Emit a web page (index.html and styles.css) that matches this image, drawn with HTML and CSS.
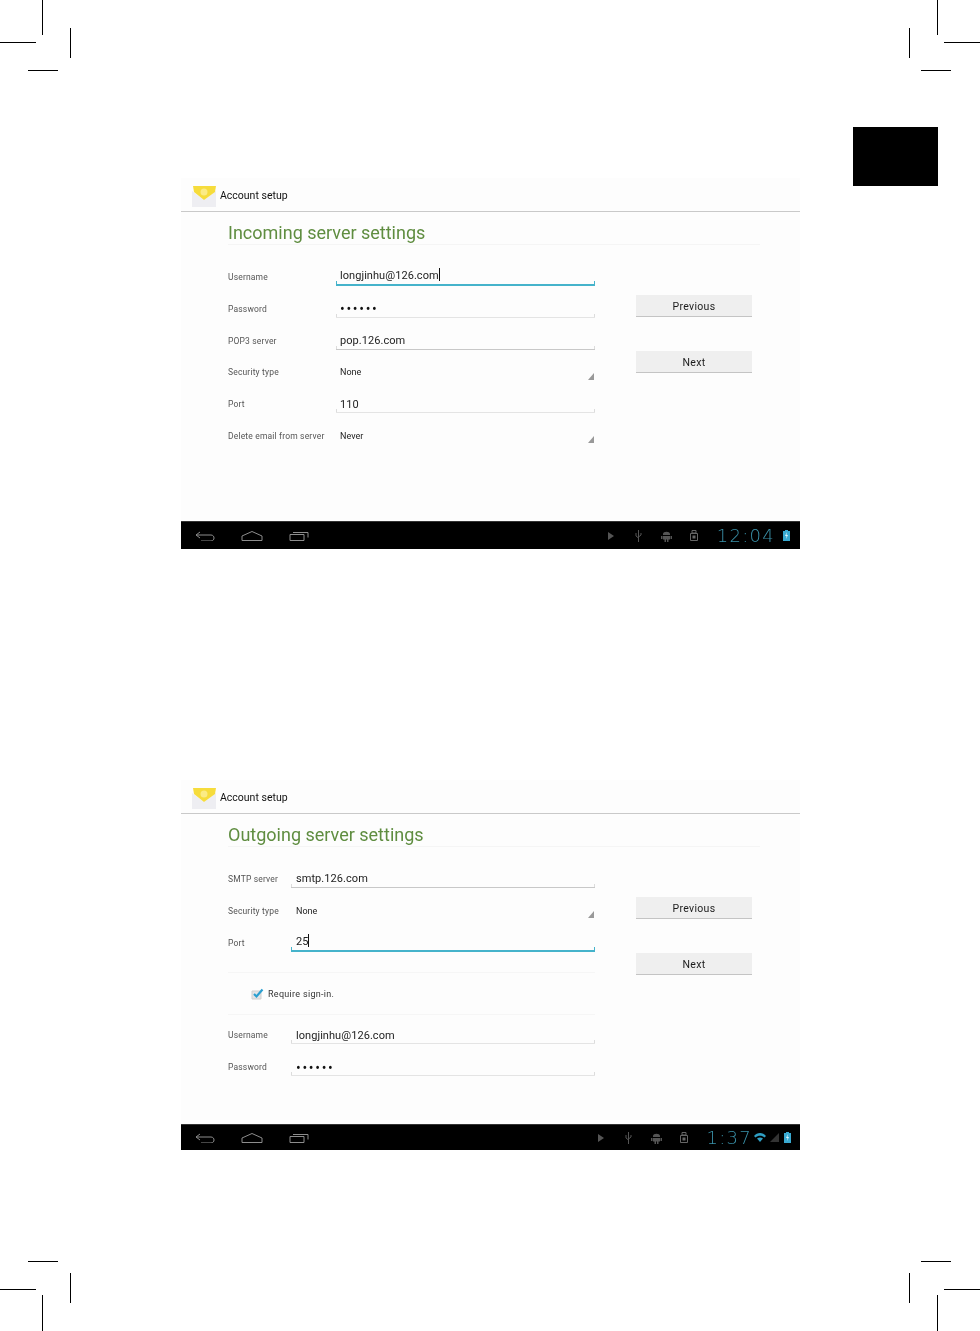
FILE: index.html
```html
<!DOCTYPE html>
<html lang="en">
<head>
  <meta charset="UTF-8">
  <title>Account setup</title>
  <link rel="stylesheet" href="styles.css">
</head>
<body>
  <!-- crop marks of the printed page -->
  <i class="mark v x42 top-out"></i>
  <i class="mark h l-out y42"></i>
  <i class="mark v x70 top-in"></i>
  <i class="mark h l-in y70"></i>
  <i class="mark v x937 top-out"></i>
  <i class="mark h r-out y42"></i>
  <i class="mark v x909 top-in"></i>
  <i class="mark h r-in y70"></i>
  <i class="mark h l-in y1261"></i>
  <i class="mark h l-out y1289"></i>
  <i class="mark v x70 bot-in"></i>
  <i class="mark v x42 bot-out"></i>
  <i class="mark h r-in y1261"></i>
  <i class="mark h r-out y1289"></i>
  <i class="mark v x909 bot-in"></i>
  <i class="mark v x937 bot-out"></i>
  <div class="tab"></div>

  <section class="screen">
    <header class="screen-head">
      <svg class="mail" viewBox="0 0 26 23"><path d="M1 6 13 15 25 6V22H1Z" fill="#eeeef2"/><path d="M2 1H25L24 7 13 15 3 7Z" fill="#f6dc3c"/><circle cx="13" cy="7" r="3.5" fill="#fbeb85"/></svg>
      <span>Account setup</span>
    </header>
    <div class="screen-main">
      <h1>Incoming server settings</h1>
      <div class="columns">
        <div class="form form-in">
          <label>Username</label>
          <div class="field active">longjinhu@126.com<b class="caret"></b></div>
          <label>Password</label>
          <div class="field dots">••••••</div>
          <label>POP3 server</label>
          <div class="field strong">pop.126.com</div>
          <label>Security type</label>
          <div class="spinner">None</div>
          <label>Port</label>
          <div class="field">110</div>
          <label>Delete email from server</label>
          <div class="spinner">Never</div>
        </div>
        <div class="side">
          <button>Previous</button>
          <button>Next</button>
        </div>
      </div>
    </div>
    <footer class="nav">
      <div class="nav-keys">
        <svg viewBox="0 0 20 10"><path d="M5 1 1 4 5 7M1 4H16C20 4 20 10 16 10H6"/></svg>
        <svg viewBox="0 0 22 10"><path d="M1 9.5V5L11 .5 21 5V9.5Z"/></svg>
        <svg viewBox="0 0 20 10"><path d="M1 3.5H15V9.5H1ZM4 1.500H19V6.500"/></svg>
      </div>
      <div class="nav-status">
        <svg class="s-play" viewBox="0 0 6 8"><path d="M0 0 6 4 0 8Z"/></svg>
        <svg class="s-usb" viewBox="0 0 7 12"><path d="M3.500 0V12M1 3V6L3.500 8M6 3V5L3.500 7"/></svg>
        <svg class="s-bug" viewBox="0 0 11 12"><path d="M2 4C2 1 9 1 9 4V5H2ZM0 6H1.500V9H0ZM9.500 6H11V9H9.500ZM2 6H9V9.500H7.500V12H6V9.500H5V12H3.500V9.500H2Z"/></svg>
        <svg class="s-sd" viewBox="0 0 8 11"><path d="M2 .5H6V3H2ZM.5 3.500H7.500V10.500H.5Z"/><path class="sd-core" d="M2.500 5.500H5.500V8.500H2.500Z"/></svg>
        <span class="clock">12:04</span>
        <svg class="s-batt" viewBox="0 0 7 11"><path d="M2 0H5V1H7V11H0V1H2Z"/><path class="bolt" d="M4 2 2 6H3.500L3 9 5 5H3.500Z"/></svg>
      </div>
    </footer>
  </section>

  <section class="screen screen-out">
    <header class="screen-head">
      <svg class="mail" viewBox="0 0 26 23"><path d="M1 6 13 15 25 6V22H1Z" fill="#eeeef2"/><path d="M2 1H25L24 7 13 15 3 7Z" fill="#f6dc3c"/><circle cx="13" cy="7" r="3.5" fill="#fbeb85"/></svg>
      <span>Account setup</span>
    </header>
    <div class="screen-main">
      <h1>Outgoing server settings</h1>
      <div class="columns">
        <div class="form form-out">
          <label>SMTP server</label>
          <div class="field strong">smtp.126.com</div>
          <label>Security type</label>
          <div class="spinner">None</div>
          <label>Port</label>
          <div class="field active">25<b class="caret"></b></div>
          <div class="check-row">
            <svg class="check" viewBox="0 0 13 12"><path class="box" d="M1 3H10V11H1Z"/><path class="tick" d="M3 6 5.500 8.500 11.500 1.500"/></svg>
            <span>Require sign-in.</span>
          </div>
          <label>Username</label>
          <div class="field">longjinhu@126.com</div>
          <label>Password</label>
          <div class="field dots">••••••</div>
        </div>
        <div class="side">
          <button>Previous</button>
          <button>Next</button>
        </div>
      </div>
    </div>
    <footer class="nav">
      <div class="nav-keys">
        <svg viewBox="0 0 20 10"><path d="M5 1 1 4 5 7M1 4H16C20 4 20 10 16 10H6"/></svg>
        <svg viewBox="0 0 22 10"><path d="M1 9.5V5L11 .5 21 5V9.5Z"/></svg>
        <svg viewBox="0 0 20 10"><path d="M1 3.5H15V9.5H1ZM4 1.500H19V6.500"/></svg>
      </div>
      <div class="nav-status">
        <svg class="s-play" viewBox="0 0 6 8"><path d="M0 0 6 4 0 8Z"/></svg>
        <svg class="s-usb" viewBox="0 0 7 12"><path d="M3.500 0V12M1 3V6L3.500 8M6 3V5L3.500 7"/></svg>
        <svg class="s-bug" viewBox="0 0 11 12"><path d="M2 4C2 1 9 1 9 4V5H2ZM0 6H1.500V9H0ZM9.500 6H11V9H9.500ZM2 6H9V9.500H7.500V12H6V9.500H5V12H3.500V9.500H2Z"/></svg>
        <svg class="s-sd" viewBox="0 0 8 11"><path d="M2 .5H6V3H2ZM.5 3.500H7.500V10.500H.5Z"/><path class="sd-core" d="M2.500 5.500H5.500V8.500H2.500Z"/></svg>
        <span class="clock">1:37</span>
        <svg class="s-wifi" viewBox="0 0 12 9"><path d="M0 3C3-1 9-1 12 3L10.500 4.500C8 2 4 2 1.500 4.500ZM3 5.500C5 4 7 4 9 5.500L6 9Z"/></svg>
        <svg class="s-signal" viewBox="0 0 9 9"><path d="M9 0V9H0Z"/></svg>
        <svg class="s-batt" viewBox="0 0 7 11"><path d="M2 0H5V1H7V11H0V1H2Z"/><path class="bolt" d="M4 2 2 6H3.500L3 9 5 5H3.500Z"/></svg>
      </div>
    </footer>
  </section>
</body>
</html>
```
FILE: styles.css
```css
html, body { margin: 0; }
body { position: relative; height: 1331px; overflow: hidden; background: #fff; padding: 178px 0 0 181px; box-sizing: border-box; font-family: 'Roboto', 'Liberation Sans', sans-serif; color: #1c1c1c; }

.mark { position: absolute; display: block; background: #000; }
.mark.v { width: 1px; }
.mark.h { height: 1px; }
.x42 { left: 42px; }
.x70 { left: 70px; }
.x909 { left: 909px; }
.x937 { left: 937px; }
.y42 { top: 42px; }
.y70 { top: 70px; }
.y1261 { top: 1261px; }
.y1289 { top: 1289px; }
.top-out { top: 0; height: 35px; }
.top-in { top: 28px; height: 30px; }
.bot-in { top: 1273px; height: 30px; }
.bot-out { top: 1295px; height: 36px; }
.l-out { left: 0; width: 36px; }
.l-in { left: 28px; width: 30px; }
.r-in { left: 921px; width: 30px; }
.r-out { left: 944px; width: 36px; }
.tab { position: absolute; left: 853px; top: 127px; width: 85px; height: 59px; background: #000; }

.screen { width: 619px; height: 371px; display: flex; flex-direction: column; background: #fdfdfd; filter: blur(0.4px); }
.screen-out { height: 370px; margin-top: 231px; }
.screen-out .nav { height: 26px; }

.screen-head { height: 34px; box-sizing: border-box; flex: none; display: flex; align-items: center; padding: 1px 0 0 10px; border-bottom: 1px solid #c9c9c9; font-size: 10.5px; color: #111; }
.mail { width: 26px; height: 23px; margin: 2px 3px 0 0; }

.screen-main { flex: 1; padding: 0 48px 0 47px; }
h1 { margin: 0 -8px 0 0; height: 33px; line-height: 41px; box-sizing: border-box; border-bottom: 1px solid #f5f5f5; font-size: 18px; font-weight: 400; color: #5f8d40; white-space: nowrap; }
.columns { display: flex; justify-content: space-between; margin-top: 15px; }

.form { display: grid; grid-auto-rows: 31.8px; width: 367px; }
.form-in { grid-template-columns: 108px 259px; }
.form-out { grid-template-columns: 63px 304px; grid-template-rows: 31.8px 31.8px 31.8px 60.6px 31.8px 31.8px; }
label { font-size: 8.5px; line-height: 35px; color: #555; letter-spacing: 0.17px; white-space: nowrap; }

.field { position: relative; height: 26px; box-sizing: border-box; padding: 9.5px 0 0 4px; line-height: 16px; font-size: 11px; letter-spacing: 0.06px; color: #222; border-bottom: 1px solid #e4e4e4; white-space: nowrap; }
.field::before, .field::after { content: ""; position: absolute; bottom: 0; width: 1px; height: 3px; background: inherit; border-left: 1px solid #dcdcdc; box-sizing: border-box; }
.field::before { left: 0; }
.field::after { right: 0; }
.field.strong { border-bottom-color: #c8c8c8; }
.field.active { padding-top: 8px; border-bottom: 2px solid #45b3cb; }
.field.active::before, .field.active::after { border-left-color: #45b3cb; }
.field.dots { padding-top: 11.5px; font-size: 14px; line-height: 13px; letter-spacing: 1.7px; color: #111; }
.form-out .field { padding-left: 5px; padding-top: 10.5px; }
.form-out .field.strong { padding-top: 8.5px; }
.form-out .field.active { padding-top: 8px; }
.form-out .field.dots { padding-top: 12.5px; }
.caret { display: inline-block; width: 1px; height: 13px; background: #111; vertical-align: -2px; }

.spinner { position: relative; height: 26px; box-sizing: border-box; padding-left: 4px; font-size: 9px; line-height: 35px; color: #222; }
.form-out .spinner { padding-left: 5px; }
.spinner::after { content: ""; position: absolute; right: 1px; top: 17.5px; border-style: solid; border-width: 0 0 7px 6px; border-color: transparent transparent #999 transparent; }

.check-row { grid-column: 1 / -1; margin-top: 15px; height: 41px; display: flex; align-items: center; padding-left: 23px; font-size: 9px; letter-spacing: 0.3px; color: #333; border-top: 1px solid #f6f6f6; border-bottom: 1px solid #f6f6f6; }
.check { width: 13px; height: 12px; margin-right: 4px; }
.check .box { fill: #e4e4e6; stroke: #cfcfcf; }
.check .tick { fill: none; stroke: #2a9fd0; stroke-width: 2.2; }

.side { width: 116px; padding-top: 35px; display: flex; flex-direction: column; gap: 34px; }
.side button { height: 22px; padding: 1px 0 0; border: 0; border-bottom: 1px solid #c4c4c4; background: #efefef; font: 400 10.5px 'Roboto', sans-serif; letter-spacing: 0.3px; color: #1c1c1c; }

.nav { height: 28px; flex: none; display: flex; align-items: center; justify-content: space-between; background: #000; border-top: 1px solid #333; box-sizing: border-box; }
.nav svg { display: block; fill: none; stroke: #8d8d8d; stroke-width: 1; }
.nav-keys { display: flex; gap: 26px; padding-left: 14px; }
.nav-keys svg { width: 20px; height: 10px; }
.nav-keys svg:nth-child(2) { width: 22px; }
.nav-status { display: flex; align-items: center; padding-right: 10px; }
.screen-out .nav-status { padding-right: 9px; }
.nav .s-play { width: 6px; height: 8px; fill: #555; stroke: none; margin-right: 21px; }
.nav .s-usb { width: 7px; height: 12px; stroke: #555; margin-right: 19px; }
.nav .s-bug { width: 11px; height: 12px; fill: #555; stroke: none; margin-right: 18px; }
.nav .s-sd { width: 8px; height: 11px; stroke: #666; margin-right: 19px; }
.screen-out .s-sd { margin-right: 18px; }
.nav .sd-core { fill: #666; stroke: none; }
.clock { font-family: 'DejaVu Sans', sans-serif; font-weight: 200; font-size: 18px; letter-spacing: 1.3px; color: #3a92aa; margin-right: 8px; line-height: 20px; }
.screen-out .clock { margin-right: 2px; }
.nav .s-batt { width: 7px; height: 11px; fill: #39a9d0; stroke: none; }
.nav .s-batt .bolt { fill: #dff4fb; }
.nav .s-wifi { width: 12px; height: 9px; fill: #2f9fc4; stroke: none; margin-right: 4px; }
.nav .s-signal { width: 9px; height: 9px; fill: #333; stroke: none; margin-right: 5px; }
```
